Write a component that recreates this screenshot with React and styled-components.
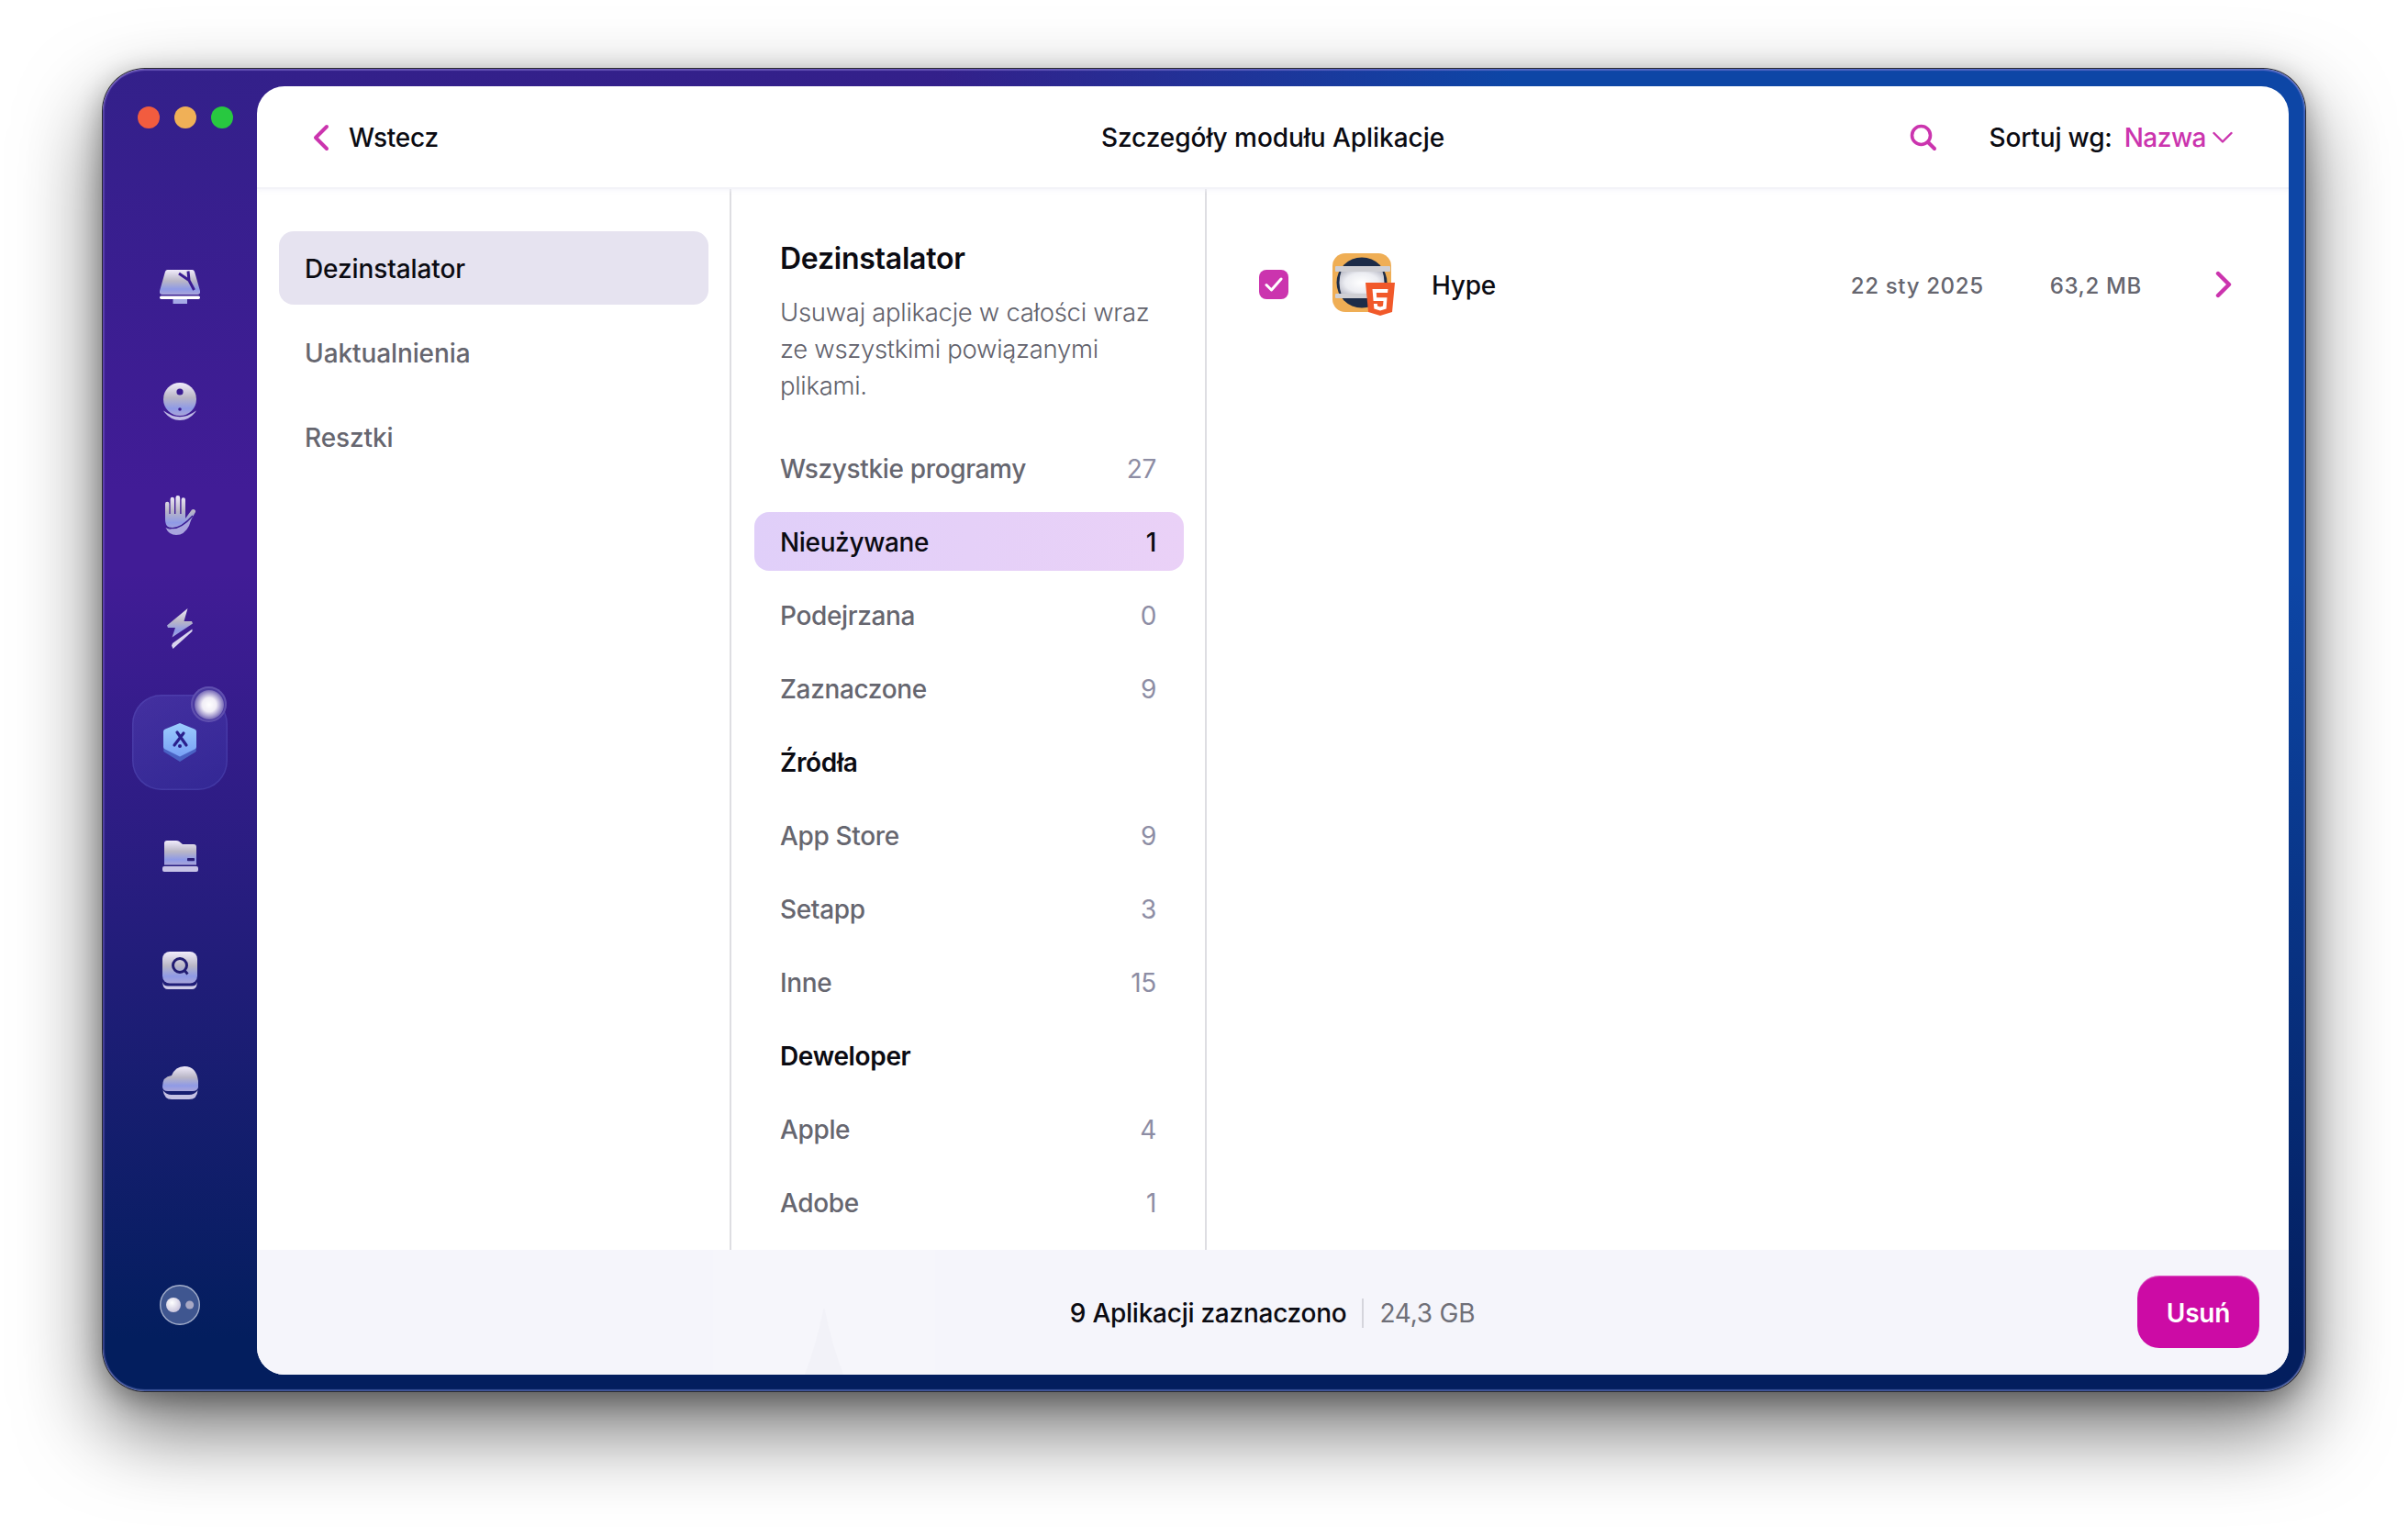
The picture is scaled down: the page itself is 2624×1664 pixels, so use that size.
import React from "react";
import styled, { createGlobalStyle } from "styled-components";

const Global = createGlobalStyle`
  html, body { margin: 0; padding: 0; background: #fff; }
  body { font-family: "Inter", "Noto Sans", sans-serif; -webkit-font-smoothing: antialiased; }
  * { box-sizing: border-box; }
`;

const Page = styled.div`
  width: 2624px;
  height: 1664px;
  padding: 75px 112px 148px;
  overflow: hidden;
  background: #fff;
`;

const Window = styled.div`
  width: 2400px;
  height: 1441px;
  display: flex;
  padding: 19px 18px 18px 0;
  border-radius: 46px;
  background:
    linear-gradient(180deg, rgba(3, 30, 96, 0) 38%, rgba(3, 30, 94, 1) 96%),
    linear-gradient(90deg, rgba(13, 70, 166, 0) 38%, rgba(13, 70, 166, 1) 64%),
    linear-gradient(180deg, #33208a 0%, #411c96 32%);
  box-shadow:
    0 0 0 1px #2a2a30,
    inset 0 2px 1px rgba(160, 140, 230, 0.45),
    inset 2px 0 1px rgba(160, 140, 230, 0.3),
    inset -2px 0 1px rgba(160, 160, 230, 0.3),
    inset 0 -2px 1px rgba(130, 150, 220, 0.45),
    0 40px 90px rgba(0, 0, 0, 0.58),
    0 8px 30px rgba(0, 0, 0, 0.32);
`;

const Rail = styled.nav`
  width: 168px;
  flex: none;
  display: flex;
  flex-direction: column;
  align-items: center;
  padding-bottom: 54px;
`;

const Lights = styled.div`
  align-self: flex-start;
  display: flex;
  gap: 16px;
  margin: 22px 0 0 38px;
  height: 24px;
`;

const Light = styled.span`
  width: 24px;
  height: 24px;
  border-radius: 50%;
  background: ${(p) => p.$color};
`;

const RailList = styled.div`
  margin-top: 111px;
  display: flex;
  flex-direction: column;
  align-items: center;
  flex: 1;
`;

const RailSlot = styled.div`
  position: relative;
  width: 104px;
  height: 124px;
  display: flex;
  align-items: center;
  justify-content: center;
`;

const ActiveTile = styled.div`
  position: absolute;
  left: 0;
  top: 10px;
  width: 104px;
  height: 104px;
  border-radius: 32px;
  background: linear-gradient(145deg, rgba(95, 90, 200, 0.32), rgba(60, 70, 190, 0.26));
  box-shadow: inset 0 0 0 1.5px rgba(120, 120, 220, 0.2);
`;

const Badge = styled.div`
  position: absolute;
  left: 64px;
  top: -9px;
  width: 39px;
  height: 39px;
  border-radius: 50%;
  background: #4a3aa0;
  box-shadow: inset 0 0 0 2px rgba(130, 115, 200, 0.4);
  display: flex;
  align-items: center;
  justify-content: center;
`;

const BadgeGlow = styled.span`
  width: 32px;
  height: 32px;
  border-radius: 50%;
  background: radial-gradient(circle, #fff 0%, #f0edf6 34%, rgba(225, 220, 238, 0.62) 56%, rgba(190, 180, 225, 0) 84%);
`;

const RailIcon = styled.svg`
  position: relative;
  display: block;
  flex: none;
`;

const Panel = styled.main`
  flex: 1;
  min-width: 0;
  display: flex;
  flex-direction: column;
  background: #fff;
  border-radius: 30px;
  overflow: hidden;
`;

const TopBar = styled.header`
  height: 112px;
  flex: none;
  display: grid;
  grid-template-columns: 1fr auto 1fr;
  align-items: center;
  padding: 2px 61px 0 61px;
  border-bottom: 2px solid #f3f3f8;
  box-shadow: 0 2px 4px rgba(240, 240, 248, 0.6);
  position: relative;
`;

const BackButton = styled.div`
  display: flex;
  align-items: center;
  gap: 21px;
  font-size: 28px;
  font-weight: 500;
  letter-spacing: -0.2px;
  color: #0b0b12;
`;

const Title = styled.h1`
  margin: 0;
  font-size: 28px;
  font-weight: 500;
  letter-spacing: -0.05px;
  color: #0b0b12;
`;

const Tools = styled.div`
  justify-self: end;
  display: flex;
  align-items: center;
  font-size: 28px;
  font-weight: 500;
  color: #0b0b12;
`;

const SortLabel = styled.span`
  margin-left: 57px;
  letter-spacing: -0.17px;
`;

const SortValue = styled.span`
  margin-left: 13px;
  margin-right: 7px;
  letter-spacing: -0.5px;
  color: #cb34ae;
`;

const Body = styled.div`
  flex: 1;
  min-height: 0;
  display: flex;
`;

const Modules = styled.aside`
  width: 517px;
  flex: none;
  padding: 46px 23px 0 24px;
  border-right: 2px solid #dedee2;
  display: flex;
  flex-direction: column;
  gap: 12px;
`;

const ModuleItem = styled.div`
  height: 80px;
  display: flex;
  align-items: center;
  padding: 2px 0 0 28px;
  border-radius: 16px;
  font-size: 28px;
  font-weight: 500;
  letter-spacing: -0.1px;
  color: ${(p) => (p.$active ? "#0b0b12" : "#66666f")};
  background: ${(p) => (p.$active ? "#e6e3f0" : "transparent")};
`;

const Filters = styled.section`
  width: 518px;
  flex: none;
  padding: 56px 23px 0 25px;
  border-right: 2px solid #dedee2;
  overflow: hidden;
`;

const FilterHead = styled.h2`
  margin: 0 0 18px 28px;
  font-size: 32px;
  line-height: 40px;
  font-weight: 600;
  letter-spacing: -0.25px;
  color: #0b0b12;
`;

const FilterText = styled.p`
  margin: 0 0 38px 28px;
  width: 420px;
  font-size: 27.5px;
  line-height: 40px;
  font-weight: 300;
  letter-spacing: -0.3px;
  color: #62626c;
`;

const FilterList = styled.div`
  display: flex;
  flex-direction: column;
  gap: 16px;
`;

const FilterRow = styled.div`
  height: 64px;
  display: flex;
  align-items: center;
  justify-content: space-between;
  padding: 2px 30px 0 28px;
  border-radius: 16px;
  font-size: 28px;
  font-weight: ${(p) => (p.$section ? 600 : 500)};
  letter-spacing: -0.35px;
  color: ${(p) => (p.$active || p.$section ? "#0b0b12" : "#66666f")};
  background: ${(p) => (p.$active ? "linear-gradient(90deg, #e0cff9, #ead1f7)" : "transparent")};
`;

const Count = styled.span`
  font-weight: ${(p) => (p.$active ? 500 : 400)};
  color: ${(p) => (p.$active ? "#0b0b12" : "#8d8da4")};
`;

const Results = styled.section`
  flex: 1;
  min-width: 0;
  padding: 62px 62px 0 57px;
`;

const AppRow = styled.div`
  height: 84px;
  display: flex;
  align-items: center;
`;

const Check = styled.span`
  width: 32px;
  height: 32px;
  flex: none;
  border-radius: 8px;
  background: #cb34ae;
  display: flex;
  align-items: center;
  justify-content: center;
  margin-right: 44px;
`;

const AppName = styled.span`
  flex: 1;
  margin-left: 40px;
  padding-top: 2px;
  font-size: 28px;
  font-weight: 500;
  letter-spacing: -0.2px;
  color: #0b0b12;
`;

const AppMeta = styled.span`
  padding-top: 2px;
  font-size: 24px;
  font-weight: 500;
  letter-spacing: 0.65px;
  color: #66666f;
  margin-right: ${(p) => p.$gap}px;
`;

const Footer = styled.footer`
  position: relative;
  height: 136px;
  flex: none;
  background: #f5f5fb;
  display: flex;
  align-items: center;
  justify-content: center;
  font-size: 28px;
  font-weight: 500;
  letter-spacing: -0.25px;
  color: #0b0b12;
`;

const Ghost = styled.svg`
  position: absolute;
  left: 497px;
  bottom: 0;
`;

const Selected = styled.div`
  position: relative;
  display: flex;
  align-items: center;
  margin-left: -1px;
  padding-top: 2px;
`;

const Size = styled.span`
  margin-left: 17px;
  padding-left: 17px;
  height: 32px;
  line-height: 32px;
  border-left: 2px solid #d5d5dc;
  font-weight: 400;
  color: #6f6f78;
`;

const RemoveButton = styled.button`
  position: absolute;
  right: 32px;
  top: 28px;
  width: 133px;
  height: 79px;
  padding: 2px 0 0;
  border: 0;
  border-radius: 24px;
  background: #cc0ba5;
  box-shadow: inset 0 1px 1px rgba(255, 255, 255, 0.35);
  color: #fff;
  font: 600 28px "Inter", sans-serif;
  letter-spacing: -0.2px;
`;

const Sheen = ({ id }) => (
  <defs>
    <linearGradient id={id} x1="0" y1="0" x2="0" y2="1">
      <stop offset="0" stopColor="#f1ecfc" />
      <stop offset="0.45" stopColor="#b9b6c6" />
      <stop offset="0.78" stopColor="#8f9ae6" />
      <stop offset="1" stopColor="#a9a5da" />
    </linearGradient>
  </defs>
);

const DARK = "#3a1c92";

const Glyph = {
  Cleanup: () => (
    <RailIcon width="44" height="37" viewBox="0 0 44 37" style={{ top: -1 }}>
      <Sheen id="a1" />
      <path d="M9 0H35a3 3 0 0 1 3 2L44 23a3 3 0 0 1-3 4H3a3 3 0 0 1-3-4L6 2a3 3 0 0 1 3-2Z" fill="url(#a1)" />
      <path d="M21 4L32 11.5L37.5 22M31 1.5L32 11.5" stroke={DARK} strokeWidth="3" fill="none" />
      <rect x="0" y="28.5" width="44" height="3.5" rx="1.7" fill="#fff" />
      <rect x="14.5" y="32" width="15.5" height="5" fill="#a5aae6" />
    </RailIcon>
  ),
  Ball: () => (
    <RailIcon width="36" height="41" viewBox="0 0 36 41">
      <Sheen id="a2" />
      <circle cx="18" cy="18" r="18" fill="url(#a2)" />
      <path d="M.3 30.5Q18 44 35.7 30.5Q35.6 31 35 32Q28 41 18 41T1 32Q.4 31 .3 30.5Z" fill="#c0bbe6" />
      <circle cx="18" cy="10" r="3.6" fill={DARK} />
      <circle cx="18" cy="29" r="1.8" fill={DARK} />
    </RailIcon>
  ),
  Hand: () => (
    <RailIcon width="35" height="43" viewBox="0 0 35 43">
      <Sheen id="a3" />
      <path d="M1 26V9a2.2 2.2 0 0 1 4.4 0V20H6.6V4a2.2 2.2 0 0 1 4.4 0V20h1.4V2.4a2.4 2.4 0 0 1 4.8 0V20h1.4V4.5a2.2 2.2 0 0 1 4.4 0V25L30 15.5c2-1.5 5 .5 4 2.5L26 32c-2 4-6 6-11 6C6 38 1 34 1 26Z" fill="url(#a3)" />
      <path d="M1.5 35Q14 42 30 24L27 33Q22 43 13 43Q5 43 1.5 35Z" fill="#a9a4de" />
      <path d="M1.5 33.5Q14 41 31 22" stroke="#3a1c92" strokeWidth="1.4" fill="none" />
    </RailIcon>
  ),
  Bolt: () => (
    <RailIcon width="28" height="44" viewBox="0 0 28 44">
      <Sheen id="a4" />
      <path d="M22.5 0L0 18.5L1 21H9L5.5 31.5L28 16.5L27 14H18.5Z" fill="url(#a4)" />
      <path d="M27.5 22.5V25L6.5 44L5 40.5L6 38Z" fill="#d8d4ee" />
    </RailIcon>
  ),
  Hex: () => (
    <RailIcon width="36" height="42" viewBox="0 0 36 42">
      <defs>
        <linearGradient id="a5" x1="0" y1="0" x2="0" y2="1">
          <stop offset="0" stopColor="#9ccdfd" />
          <stop offset="1" stopColor="#78a0f5" />
        </linearGradient>
      </defs>
      <path d="M.3 31L18 42L35.7 31V26H.3Z" fill="#4a62c4" />
      <path d="M18 0L34 6.5A3 3 0 0 1 36 9.5V25.5A3 3 0 0 1 34 28.5L18 36.5L2 28.5A3 3 0 0 1 0 25.5V9.5A3 3 0 0 1 2 6.5Z" fill="url(#a5)" />
      <path d="M15 10L25 24M22 11L12 24" stroke="#2a1f8c" strokeWidth="3.2" strokeLinecap="round" fill="none" />
      <circle cx="18" cy="25" r="2" fill="#2a1f8c" />
    </RailIcon>
  ),
  Folder: () => (
    <RailIcon width="39" height="34" viewBox="0 0 39 34">
      <Sheen id="a6" />
      <path d="M2 26.5H37L37 7a3 3 0 0 0-3-3H22L18 .8Q17 0 15 0H5A3 3 0 0 0 2 3Z" fill="url(#a6)" />
      <rect x="27" y="19" width="8" height="3.2" rx=".8" fill="#2a1f78" />
      <rect x="0" y="28" width="39" height="6" rx="2" fill="#c7c3e6" />
    </RailIcon>
  ),
  Scan: () => (
    <RailIcon width="38" height="41" viewBox="0 0 38 41">
      <Sheen id="a7" />
      <path d="M.3 33Q1 37.5 6 37.5H32Q37 37.5 37.7 33V35Q37 41 32 41H6Q1 41 .3 35Z" fill="#cfcbe9" />
      <rect x="0" y="0" width="38" height="34.5" rx="8" fill="url(#a7)" />
      <circle cx="19" cy="15" r="7.5" fill="none" stroke="#211c72" strokeWidth="3" />
      <path d="M24.5 21L27.5 24.5" stroke="#211c72" strokeWidth="2.8" />
    </RailIcon>
  ),
  Cloud: () => (
    <RailIcon width="39" height="36" viewBox="0 0 39 36" style={{ top: -1 }}>
      <Sheen id="a8" />
      <path d="M0 22Q0 11 10 10Q14 0 24 0Q37 0 39 16V23Q38 27 33 27H6Q0 27 0 22Z" fill="url(#a8)" />
      <path d="M.5 26Q4 31 10 31H29Q35 31 38.5 26Q38 36 29 36H10Q2 36 .5 26Z" fill="#c5c1e4" />
    </RailIcon>
  ),
  Dots: () => (
    <RailIcon width="44" height="44" viewBox="0 0 44 44">
      <defs>
        <radialGradient id="a9" cx=".4" cy=".35" r=".7">
          <stop offset="0" stopColor="#fff" />
          <stop offset="1" stopColor="#c5c0da" />
        </radialGradient>
      </defs>
      <circle cx="22" cy="22" r="21.3" fill="#3f5690" stroke="#a3aecb" strokeWidth="1.4" />
      <circle cx="15" cy="22" r="8" fill="url(#a9)" />
      <circle cx="32.7" cy="22" r="4.5" fill="#a9a9c5" />
    </RailIcon>
  ),
};

const Chevron = ({ d, w, h, sw = 4 }) => (
  <svg width={w} height={h} viewBox={`0 0 ${w} ${h}`} style={{ display: "block", flex: "none" }}>
    <path d={d} fill="none" stroke="#cb34ae" strokeWidth={sw} strokeLinecap="round" strokeLinejoin="round" />
  </svg>
);

const HypeIcon = () => (
  <svg width="72" height="72" viewBox="0 0 72 72" style={{ display: "block", flex: "none" }}>
    <defs>
      <radialGradient id="hs" cx=".5" cy=".5" r=".62">
        <stop offset="0" stopColor="#fff" />
        <stop offset="0.6" stopColor="#ecedf2" />
        <stop offset="1" stopColor="#b9bac6" />
      </radialGradient>
    </defs>
    <rect x="4" y="2" width="64" height="64" rx="14" fill="#efae55" />
    <circle cx="36" cy="34" r="27.5" fill="#1d2c48" />
    <path d="M14 20H58Q63 34 58 48H14Q9 34 14 20Z" fill="url(#hs)" />
    <rect x="7" y="16" width="60" height="6" rx="1" fill="#cfcfd4" />
    <rect x="7" y="46" width="60" height="5" rx="1" fill="#cfcfd4" />
    <path d="M40 34H72L69 66L56 70L43 66Z" fill="#f1592a" />
    <path d="M64.5 41H47.5L48.6 54H59.5L59 59.5L56 60.5L53 59.5L52.8 57H48.9L49.4 62.5L56 64.5L62.6 62.5L63.5 50.3H52.2L51.8 45H64.1Z" fill="#fff" />
  </svg>
);

const railItems = ["Cleanup", "Ball", "Hand", "Bolt", "Hex", "Folder", "Scan", "Cloud"];

const filters = [
  { label: "Wszystkie programy", count: 27 },
  { label: "Nieużywane", count: 1, active: true },
  { label: "Podejrzana", count: 0 },
  { label: "Zaznaczone", count: 9 },
  { label: "Źródła", section: true },
  { label: "App Store", count: 9 },
  { label: "Setapp", count: 3 },
  { label: "Inne", count: 15 },
  { label: "Deweloper", section: true },
  { label: "Apple", count: 4 },
  { label: "Adobe", count: 1 },
];

export default function App() {
  return (
    <Page>
      <Global />
      <Window>
        <Rail>
          <Lights>
            <Light $color="#f25c3f" />
            <Light $color="#f0b057" />
            <Light $color="#28c840" />
          </Lights>
          <RailList>
            {railItems.map((name) => {
              const Icon = Glyph[name];
              return (
                <RailSlot key={name}>
                  {name === "Hex" && (
                    <ActiveTile>
                      <Badge>
                        <BadgeGlow />
                      </Badge>
                    </ActiveTile>
                  )}
                  <Icon />
                </RailSlot>
              );
            })}
          </RailList>
          <Glyph.Dots />
        </Rail>
        <Panel>
          <TopBar>
            <BackButton>
              <Chevron w={18} h={30} d="M15 3L3 15L15 27" />
              Wstecz
            </BackButton>
            <Title>Szczegóły modułu Aplikacje</Title>
            <Tools>
              <svg width="30" height="30" viewBox="0 0 30 30" style={{ display: "block" }}>
                <circle cx="12.5" cy="12.5" r="10" fill="none" stroke="#cb34ae" strokeWidth="3.6" />
                <path d="M20 20L27 27" stroke="#cb34ae" strokeWidth="4" strokeLinecap="round" />
              </svg>
              <SortLabel>Sortuj wg:</SortLabel>
              <SortValue>Nazwa</SortValue>
              <Chevron w={22} h={14} sw={2.4} d="M1.5 2L11 11.5L20.5 2" />
            </Tools>
          </TopBar>
          <Body>
            <Modules>
              <ModuleItem $active>Dezinstalator</ModuleItem>
              <ModuleItem>Uaktualnienia</ModuleItem>
              <ModuleItem>Resztki</ModuleItem>
            </Modules>
            <Filters>
              <FilterHead>Dezinstalator</FilterHead>
              <FilterText>Usuwaj aplikacje w całości wraz ze wszystkimi powiązanymi plikami.</FilterText>
              <FilterList>
                {filters.map((f) => (
                  <FilterRow key={f.label} $active={f.active} $section={f.section}>
                    {f.label}
                    {!f.section && <Count $active={f.active}>{f.count}</Count>}
                  </FilterRow>
                ))}
              </FilterList>
            </Filters>
            <Results>
              <AppRow>
                <Check>
                  <svg width="20" height="16" viewBox="0 0 20 16">
                    <path d="M2 8.5L7.5 14L18 2" fill="none" stroke="#fff" strokeWidth="3" strokeLinecap="round" strokeLinejoin="round" />
                  </svg>
                </Check>
                <HypeIcon />
                <AppName>Hype</AppName>
                <AppMeta $gap={72}>22 sty 2025</AppMeta>
                <AppMeta $gap={80}>63,2 MB</AppMeta>
                <Chevron w={18} h={30} sw={4.4} d="M3 3L15 15L3 27" />
              </AppRow>
            </Results>
          </Body>
          <Footer>
            <Ghost width="242" height="136" viewBox="0 0 242 136">
              <rect width="242" height="136" fill="#f6f6fb" />
              <path d="M121 62Q112 105 100 136H142Q130 105 121 62Z" fill="#f2f2f8" />
            </Ghost>
            <Selected>
              9 Aplikacji zaznaczono
              <Size>24,3 GB</Size>
            </Selected>
            <RemoveButton>Usuń</RemoveButton>
          </Footer>
        </Panel>
      </Window>
    </Page>
  );
}
